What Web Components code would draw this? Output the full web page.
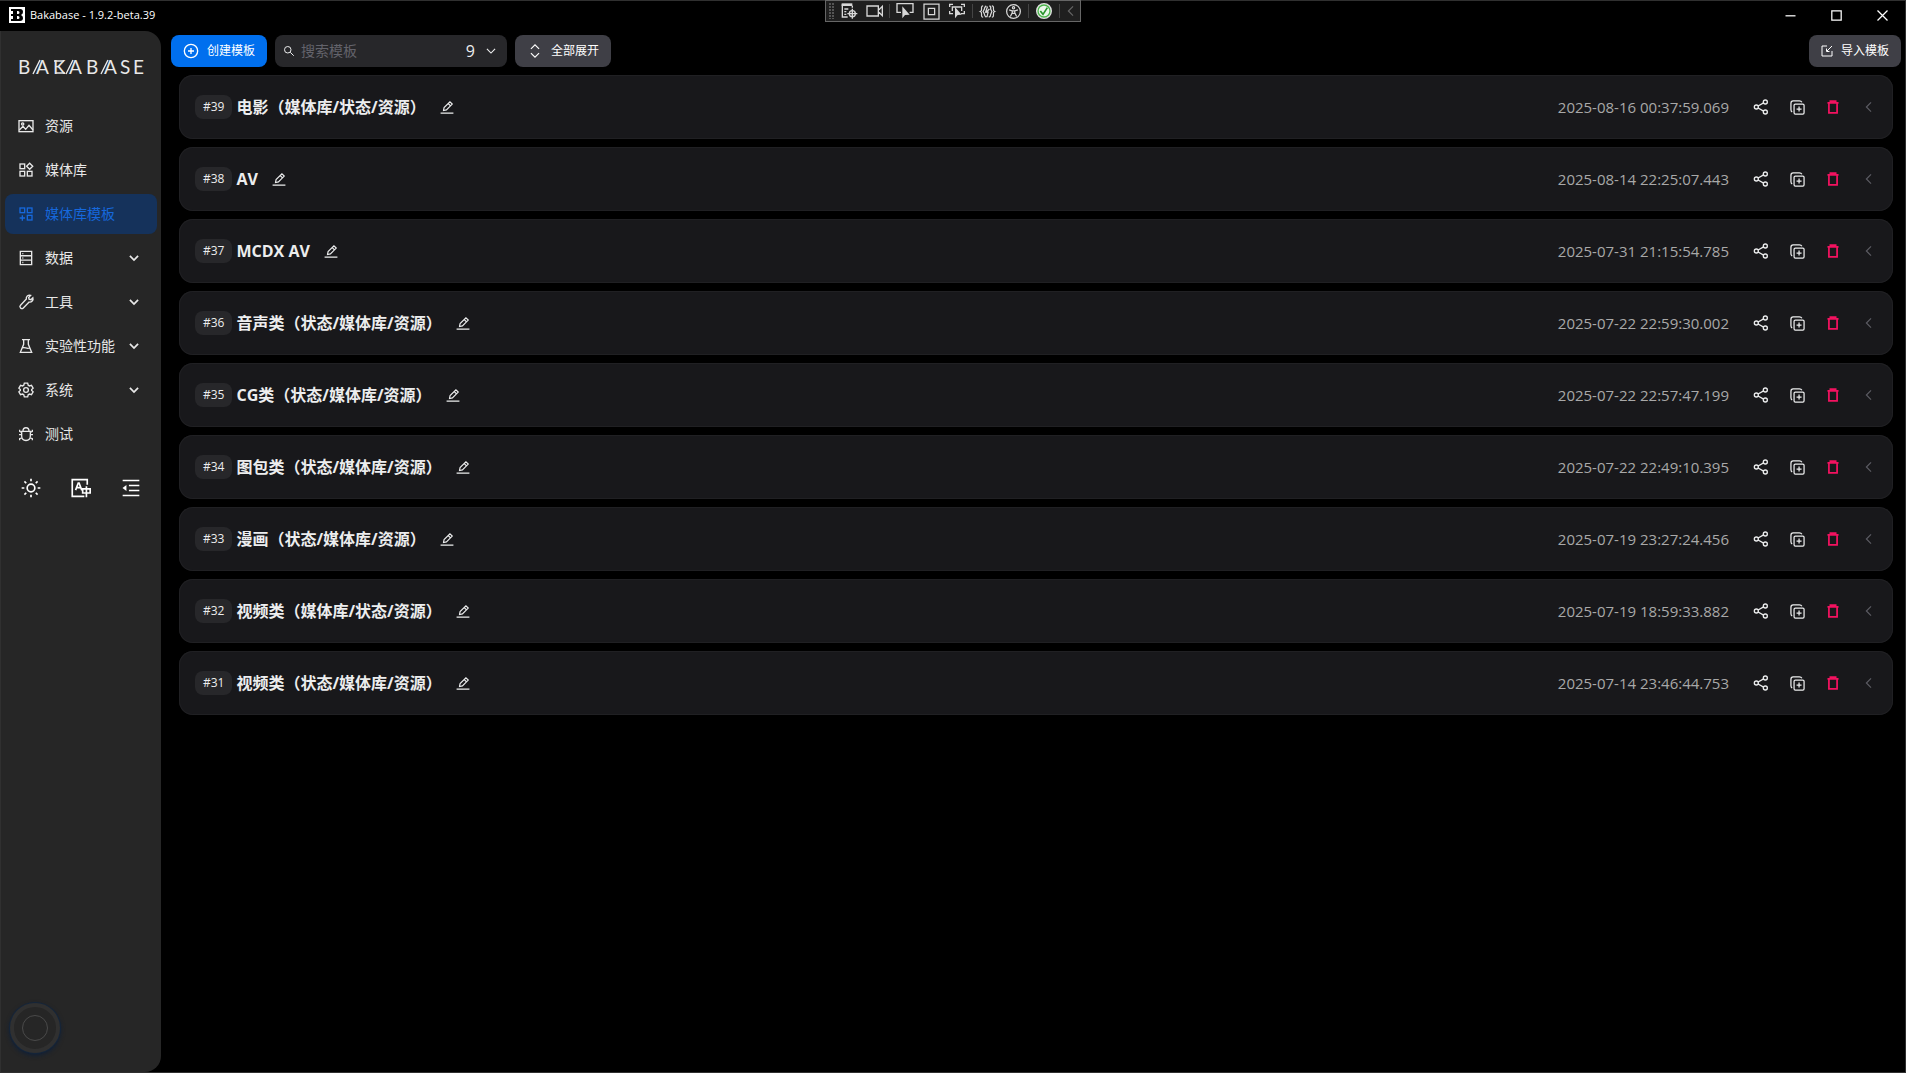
<!DOCTYPE html>
<html lang="zh-CN">
<head>
<meta charset="utf-8">
<title>Bakabase - 1.9.2-beta.39</title>
<style>
html,body{height:100%}
body{margin:0;background:#000;color:#ecedee;font-family:"Open Sans","Noto Sans CJK SC",sans-serif;overflow:hidden}
</style>
</head>
<body>
<bk-app></bk-app>
<script>
const ICONS = {
  picture:'<rect x="1.5" y="4" width="21" height="16.5"/><circle cx="7" cy="9" r="1.7"/><path d="M2 18l5.5-5.5 4 4.5 5-6 6 7"/>',
  apps:'<rect x="3" y="3" width="7" height="7"/><rect x="3" y="14" width="7" height="7"/><rect x="14" y="14" width="7" height="7"/><path d="M17.5 1.8l4.6 4.6-4.6 4.6-4.6-4.6z"/>',
  appsAdd:'<rect x="3" y="3" width="7" height="7"/><rect x="14" y="3" width="7" height="7"/><rect x="14" y="14" width="7" height="7"/><path d="M6.5 14v8M2.5 18h8"/>',
  data:'<path d="M3.5 2h17v20h-17zM3.500 8.600h17M3.500 15.300h17M6.500 5.400h1.500M6.500 12h1.500M6.500 18.700h1.500"/>',
  tool:'<path d="M12.500 7.500c-.8-3.500 2.500-6.800 6.500-5.500l-3 3.200.6 2.700 2.700.6 3-3c1.200 4-2 7.300-5.600 6.600l-8.700 8.900c-2.800 2.700-6.900-1.400-4.200-4.200z"/>',
  flask:'<path d="M6 2.500h12M8.500 2.500v7l-5 12h17l-5-12v-7M6.500 15c4-2 6 2 11 0"/>',
  gear:'<circle cx="12" cy="12" r="3.600"/><path d="M9.500 1.800h5l.8 3 1.900 1.100 3-.9 2.500 4.300-2.200 2.100v1.200l2.200 2.100-2.500 4.300-3-.9-1.900 1.100-.8 3h-5l-.8-3-1.900-1.100-3 .9-2.500-4.300 2.200-2.100v-1.200l-2.200-2.100 2.500-4.300 3 .9 1.900-1.100z"/>',
  bug:'<path d="M7.500 7.500c0-6.500 9-6.500 9 0M5.500 8h13v7c0 9-13 9-13 0zM1.500 13h4M18.500 13h4M2.500 5.500v2.500l3 1.500M21.500 5.500v2.500l-3 1.500M2.500 21.500v-2.500l3.500-1.500M21.500 21.500v-2.500l-3.500-1.500"/>',
  down:'<path d="M5 8.500l7 7 7-7"/>',
  left:'<path d="M15.500 4l-8 8 8 8"/>',
  sun:'<circle cx="12" cy="12" r="4.600"/><path d="M12 .8v3.200M12 20v3.200M.8 12h3.200M20 12h3.200M4.100 4.100l2.200 2.200M17.700 17.700l2.200 2.200M4.100 19.900l2.200-2.200M17.700 6.300l2.200-2.200"/>',
  lang:'<path d="M19.500 8v-6h-18v20h14.500M5.500 14.500l3.200-8.500h1l3.200 8.500M6.800 11.500h5M14 13h9v5h-9zM18.500 10v13"/>',
  fold:'<path d="M2 3h20M9.500 9h12.500M9.500 15h12.500M2 21h20"/><path d="M6.500 8.500v7l-4.700-3.500z" fill="currentColor" stroke="none"/>',
  plus:'<circle cx="12" cy="12" r="10"/><path d="M12 7.500v9M7.500 12h9"/>',
  search:'<circle cx="9.500" cy="9.500" r="6.500"/><path d="M14.500 14.500l7 7"/>',
  updown:'<path d="M5 8.500l7-7 7 7M5 15.500l7 7 7-7"/>',
  importer:'<path d="M12 2h-10v20h20v-10M22 2l-10 10M11 7v6h6"/>',
  edit:'<path d="M1 22.500h22M6 18l1-5 10-10 4 4-10 10zM14 6l4 4"/>',
  share:'<circle cx="5" cy="12" r="3"/><circle cx="18.500" cy="4.500" r="3"/><circle cx="18.500" cy="19.500" r="3"/><path d="M7.600 10.500l8.300-4.600M7.600 13.500l8.300 4.600"/>',
  copy:'<rect x="6.500" y="6.500" width="16" height="16" rx="2"/><path d="M3.500 19c-2-1-2-2-2-4v-10q0-3.500 3.500-3.500h10c2 0 3 0 4 2M14.500 10.500v8M10.500 14.500h8"/>',
  trash:'<path d="M2.500 5h19M7.500 4.500v-2.500h9v2.500M5 5v17h14v-17" />',
  min:'<path d="M4 12.500h16"/>',
  max:'<path d="M4.500 4.500h15v15h-15z"/>',
  close:'<path d="M4 4l16 16M20 4l-16 16"/>',
  inspect:'<path d="M1 2.500h16" stroke-width="4"/><path d="M2 2v19h8M5 9h6M5 13h3M5 17h3M17 4v3"/><circle cx="17" cy="16" r="4.500"/><path d="M17 8.500v15M9.500 16h15"/>',
  camera:'<path d="M0 4.500h17v15h-17zM18 10l5-5v14l-5-5"/>',
  pick:'<path d="M6 14h-6v-13h24v13h-5"/><path d="M8 5v18l4-5 7-.5z" fill="currentColor" stroke="none"/>',
  frame:'<path d="M0 0h24v24h-24zM7 7h10v10h-10z"/>',
  track:'<path d="M6 2h-5v4M18 2h5v4M1 12v4h5M23 12v4h-5M5 12v-6h14v6"/><path d="M9 6v17l4-5 6-.5z" fill="currentColor" stroke="none"/>',
  hot:'<path d="M5 3q-3 0-2.500 4t-2 5q2.500 1 2 5t2.500 4M19 3q3 0 2.500 4t2 5q-2.500 1-2 5t-2.500 4M10 3q-3 2-3 5l-2 4 2 4q0 3 3 5M9 14l6-6M15 3q3 1 2 5l2 4-2 5q0 3-3 4M12 4l-3 9h4l-2 8"/>',
  access:'<circle cx="12" cy="12" r="11"/><circle cx="12" cy="6" r="1.800"/><path d="M5 9.500l5 1.500v3l-3 6M19 9.500l-5 1.500v3l3 6M10 11h4M10 15h4"/>',
  ok:'<circle cx="12" cy="12" r="11" fill="#fff" stroke="#ddd"/><circle cx="12" cy="12" r="9" fill="#eaf7ea" stroke="#4ab44a"/><path d="M6.500 12l4 5 6.500-10" stroke="#28942c" stroke-width="2.500"/>'
};
function define(name, html){
  const t = document.createElement('template');
  customElements.define(name, class extends HTMLElement{
    connectedCallback(){
      if(this.shadowRoot) return;
      t.innerHTML = typeof html === 'function' ? html(this) : html;
      this.attachShadow({mode:'open'}).append(t.content.cloneNode(true));
    }
  });
}
const BASE = '*{box-sizing:border-box}button{font:inherit;color:inherit;border:0;background:none;padding:0;margin:0;cursor:pointer}';

define('bk-icon', el => `<style>:host{display:inline-flex;flex:none}svg{display:block;overflow:visible}</style>
<svg width="${el.getAttribute('size')||16}" height="${el.getAttribute('size')||16}" viewBox="0 0 24 24" fill="none" stroke="currentColor" stroke-width="${el.getAttribute('weight')||2}" aria-hidden="true">${ICONS[el.getAttribute('name')]}</svg>`);

define('bk-button', el => `<style>${BASE}
:host{display:block;flex:none}
button{display:flex;align-items:center;gap:8px;height:32px;padding:0 12px;border-radius:8px;background:${el.hasAttribute('primary')?'#006fee':'#3f3f46'};color:#fff;font-size:12px;line-height:16px;white-space:nowrap}
.i{display:flex;justify-content:center;width:${el.getAttribute('box')||16}px}
</style><button type="button"><span class="i"><bk-icon name="${el.getAttribute('icon')}" size="${el.getAttribute('size')||14}"></bk-icon></span><slot></slot></button>`);

define('bk-icon-button', el => `<style>${BASE}
:host{display:block;flex:none}
button{display:flex;align-items:center;justify-content:center;width:32px;height:32px}
</style><button type="button" aria-label="${el.getAttribute('label')}"><bk-icon name="${el.getAttribute('icon')}" size="${el.getAttribute('size')||14}" weight="${el.getAttribute('weight')||2}"></bk-icon></button>`);

define('bk-title-bar', `<style>${BASE}
:host{display:flex;align-items:center;box-sizing:border-box;height:31px;padding-bottom:2px;border-top:1px solid #303030;color:#fff;font-size:11px;line-height:16px}
.mark{margin:0 5px 0 9px}
.name{flex:1}
button{width:46px;height:28px;display:flex;align-items:center;justify-content:center}
</style>
<svg class="mark" width="16" height="16" viewBox="0 0 16 16" aria-hidden="true"><path fill="#fff" d="M0 0h16v16H0z"/><path fill="#000" fill-rule="evenodd" d="M2 2h9q3 0 3 3 0 2-2 3 2 1 2 3 0 3-3 3H2v-2h2V9H2V7h2V4H2zM8 4v3h1q1.500 0 1.500-1.500T9 4zM8 9v3h1q1.500 0 1.500-1.500T9 9z"/></svg>
<span class="name">Bakabase - 1.9.2-beta.39</span>
<button type="button" aria-label="最小化"><bk-icon name="min" size="15"></bk-icon></button>
<button type="button" aria-label="最大化"><bk-icon name="max" size="15"></bk-icon></button>
<button type="button" aria-label="关闭"><bk-icon name="close" size="15"></bk-icon></button>`);

define('bk-debug-bar', `<style>${BASE}
:host{position:absolute;top:0;left:50%;margin-left:-128px;z-index:2;display:flex;align-items:center;box-sizing:border-box;width:256px;height:22px;border:1px solid #666;background:#1f1f1f;color:#d8d8d8}
.grip{width:6px;height:16px;margin:0 1px 0 3px;background:radial-gradient(circle at 1px 1px,#555 1px,transparent 1px) 0 0/3px 3px}
button{flex:none;width:26px;height:20px;display:flex;align-items:center;justify-content:center}
i{flex:1;display:flex;justify-content:center}
i::before{content:"";width:1px;height:14px;background:#444}
.dim{width:18px;color:#666}
</style><span class="grip"></span>
<button aria-label="转到实时可视化树"><bk-icon name="inspect"></bk-icon></button><button aria-label="录制"><bk-icon name="camera"></bk-icon></button><i></i>
<button aria-label="选择元素"><bk-icon name="pick"></bk-icon></button><button aria-label="显示布局"><bk-icon name="frame" size="15"></bk-icon></button><button aria-label="跟踪焦点"><bk-icon name="track"></bk-icon></button><i></i>
<button aria-label="热重载"><bk-icon name="hot" size="15"></bk-icon></button><button aria-label="辅助功能"><bk-icon name="access" size="15"></bk-icon></button><i></i>
<button aria-label="正常"><bk-icon name="ok"></bk-icon></button><i></i><button class="dim" aria-label="收起"><bk-icon name="left" size="14"></bk-icon></button>`);

define('bk-nav-item', el => `<style>${BASE}
:host{display:block}
a{display:flex;align-items:center;height:40px;padding:0 16px 0 13px;border-radius:8px;font-size:14px;line-height:20px;color:#e8e8e8;text-decoration:none}
:host([active]) a{background:#15325b;color:#1668dc}
.t{flex:1;margin-left:11px;white-space:nowrap}
</style><a href="#"><bk-icon name="${el.getAttribute('icon')}" size="16"></bk-icon><span class="t"><slot></slot></span>${el.hasAttribute('more')?'<bk-icon name="down" size="14" weight="3"></bk-icon>':''}</a>`);

define('bk-sidebar', `<style>${BASE}
:host{display:flex;flex-direction:column;flex:none;box-sizing:border-box;width:161px;background:#262626;border-left:1px solid #303030;border-radius:0 16px 16px 0;padding:0 4px}
.logo{display:block;margin:24px 0 27px 12px}
nav{display:flex;flex-direction:column;gap:4px}
.tools{display:flex;gap:18px;margin:18px 0 0 10px}
.tools bk-icon-button{color:#fff}
.float{margin:auto 0 19px 5px;width:50px;height:50px;border-radius:50%;background:#262626;border:4px solid #303030;box-shadow:0 0 0 1px #15253a,0 2px 5px #0a1e3c;display:flex;align-items:center;justify-content:center}
.float::before{content:"";width:24px;height:24px;border:1px solid #4a4a4a;border-radius:50%}
</style>
<svg class="logo" width="136" height="24" viewBox="0 0 136 24" role="img" aria-label="BAKABASE" fill="none" stroke="#e8e8e8" stroke-width="1.400">
<text x="1 19 36 52 69 87 103 116" y="19" fill="#e8e8e8" stroke="none" font-family="Lato" font-size="19">BAKABASE</text>
<path d="M16 19l7-14M49 19l7-14M84 19l7-14M37 6h10M38 18h10"/></svg>
<nav>
<bk-nav-item icon="picture">资源</bk-nav-item>
<bk-nav-item icon="apps">媒体库</bk-nav-item>
<bk-nav-item icon="appsAdd" active>媒体库模板</bk-nav-item>
<bk-nav-item icon="data" more>数据</bk-nav-item>
<bk-nav-item icon="tool" more>工具</bk-nav-item>
<bk-nav-item icon="flask" more>实验性功能</bk-nav-item>
<bk-nav-item icon="gear" more>系统</bk-nav-item>
<bk-nav-item icon="bug">测试</bk-nav-item>
</nav>
<div class="tools"><bk-icon-button icon="sun" size="20" label="主题"></bk-icon-button><bk-icon-button icon="lang" size="20" label="语言"></bk-icon-button><bk-icon-button icon="fold" size="20" label="折叠"></bk-icon-button></div>
<button class="float" type="button" aria-label="助手"></button>`);

define('bk-search', `<style>${BASE}
:host{display:flex;align-items:center;box-sizing:border-box;width:232px;height:32px;padding:0 8px;border-radius:8px;background:#27272a}
label{display:flex}
input{flex:1;min-width:0;border:0;outline:0;background:none;padding:0;margin-left:6px;font:inherit;font-size:14px;line-height:20px;color:#fff}
input::placeholder{color:#63636b;opacity:1}
.n{font-size:16px;line-height:24px}
button{display:flex;width:16px;margin:0 0 0 8px;justify-content:center}
</style><label for="q" aria-label="搜索"><bk-icon name="search" size="12"></bk-icon></label><input id="q" type="text" placeholder="搜索模板"><span class="n">9</span><button type="button" aria-label="展开列表"><bk-icon name="down" size="14"></bk-icon></button>`);

define('bk-template', el => `<style>${BASE}
:host{display:flex;align-items:center;box-sizing:border-box;height:64px;padding:0 8px 0 16px;border-radius:14px;background:#18181b;box-shadow:inset 0 0 0 1px #202023}
.id{height:24px;padding:0 8px;border-radius:8px;background:#27272a;font-size:12px;line-height:24px}
h2{margin:0 5px 0 4px;font-size:16px;line-height:24px;font-weight:700;color:#ecedee;white-space:nowrap}
time{margin:0 16px 0 auto;font-size:15px;line-height:24px;color:#a8a8a8}
.acts{display:flex;gap:4px}
.del{color:#f31260}.more{color:#5c5c63}
</style><span class="id">#${el.getAttribute('num')}</span><h2><slot></slot></h2><bk-icon-button icon="edit" label="编辑"></bk-icon-button>
<time>${el.getAttribute('time')}</time><div class="acts"><bk-icon-button icon="share" size="16" label="分享"></bk-icon-button><bk-icon-button icon="copy" size="15" label="复制"></bk-icon-button><bk-icon-button class="del" icon="trash" weight="3" label="删除"></bk-icon-button><bk-icon-button class="more" icon="left" label="展开"></bk-icon-button></div>`);

const ROWS = [
 [39,'电影（媒体库/状态/资源）','2025-08-16 00:37:59.069'],
 [38,'AV','2025-08-14 22:25:07.443'],
 [37,'MCDX AV','2025-07-31 21:15:54.785'],
 [36,'音声类（状态/媒体库/资源）','2025-07-22 22:59:30.002'],
 [35,'CG类（状态/媒体库/资源）','2025-07-22 22:57:47.199'],
 [34,'图包类（状态/媒体库/资源）','2025-07-22 22:49:10.395'],
 [33,'漫画（状态/媒体库/资源）','2025-07-19 23:27:24.456'],
 [32,'视频类（媒体库/状态/资源）','2025-07-19 18:59:33.882'],
 [31,'视频类（状态/媒体库/资源）','2025-07-14 23:46:44.753']
];
define('bk-app', `<style>${BASE}
:host{display:flex;flex-direction:column;height:100vh;position:relative;border-right:1px solid #303030;border-bottom:1px solid #303030;box-sizing:border-box}
.body{flex:1;display:flex;min-height:0}
main{flex:1;min-width:0;padding:4px 4px 0 10px}
.bar{display:flex;gap:8px}
.bar .end{margin-left:auto}
.list{display:flex;flex-direction:column;gap:8px;padding:8px}
</style><bk-title-bar></bk-title-bar><bk-debug-bar></bk-debug-bar>
<div class="body"><bk-sidebar></bk-sidebar><main>
<div class="bar"><bk-button primary icon="plus" size="16">创建模板</bk-button><bk-search></bk-search><bk-button icon="updown">全部展开</bk-button><bk-button class="end" icon="importer" size="12" box="12">导入模板</bk-button></div>
<div class="list">${ROWS.map(r=>`<bk-template num="${r[0]}" time="${r[2]}">${r[1]}</bk-template>`).join('')}</div>
</main></div>`);
</script>
</body>
</html>
